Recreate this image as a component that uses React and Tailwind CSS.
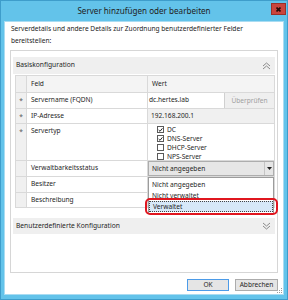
// ServerDialog.jsx
const font = "font-['Noto_Sans',sans-serif]";

const ChevronsUp = () => (
  <svg width="9" height="8" viewBox="0 0 9 8" fill="none" stroke="#8a8a8a" strokeWidth="1">
    <path d="M1 4 L4.5 1 L8 4" />
    <path d="M1 7 L4.5 4 L8 7" />
  </svg>
);

const ChevronsDown = () => (
  <svg width="9" height="8" viewBox="0 0 9 8" fill="none" stroke="#8a8a8a" strokeWidth="1">
    <path d="M1 1 L4.5 4 L8 1" />
    <path d="M1 4 L4.5 7 L8 4" />
  </svg>
);

const Checkbox = ({ checked, label }) => (
  <div className="flex items-center h-[9px] gap-[3px]">
    <div className="w-[7px] h-[7px] border border-[#5a5a5a] bg-white flex items-center justify-center">
      {checked && (
        <svg width="6" height="6" viewBox="0 0 6 6" fill="none" stroke="#222" strokeWidth="1.2">
          <path d="M0.8 3 L2.4 4.6 L5.3 1" />
        </svg>
      )}
    </div>
    <span>{label}</span>
  </div>
);

const Row = ({ star, label, h, children, valueClass = "" }) => (
  <>
    <div className={`${h} bg-[#f0f0f0] border-r border-b border-[#d9d9d9] flex justify-center pt-[3px] text-[#555]`}>
      {star ? "*" : ""}
    </div>
    <div className={`${h} border-r border-b border-[#d9d9d9] pl-[4px] pt-[2px]`}>{label}</div>
    <div className={`${h} border-b border-[#d9d9d9] ${valueClass}`}>{children}</div>
  </>
);

export default function App() {
  return (
    <div className={`w-[288px] h-[300px] bg-[#63c3ea] border border-[#3e9dcb] flex flex-col ${font} text-[#1e1e1e]`}>
      {/* title bar */}
      <div className="h-[20px] grid grid-cols-[1fr_auto_1fr] items-center">
        <div />
        <div className="text-[8.1px] text-[#222] pt-[1px]">Server hinzufügen oder bearbeiten</div>
        <div className="flex justify-end self-start pt-[2px] pr-[1px]">
          <div className="w-[15px] h-[12px] bg-[#c9453d] border border-[#9a3029] flex items-center justify-center">
            <svg width="5" height="5" viewBox="0 0 5 5" stroke="#2a0a08" strokeWidth="1.6">
              <path d="M0.5 0.5 L4.5 4.5 M4.5 0.5 L0.5 4.5" />
            </svg>
          </div>
        </div>
      </div>

      {/* client area */}
      <div className="flex-1 mx-[3px] mb-[4px] bg-white border border-[#a9dcf2] flex flex-col relative">
        <p className="text-[6.6px] leading-[12px] pl-[6px] pt-[1px] text-[#222]">
          Serverdetails und andere Details zur Zuordnung benutzerdefinierter Felder
          <br />
          bereitstellen:
        </p>

        <div className="ml-[5px] mr-[5px] mt-[3px] h-[223px] border border-[#d6d6d6] p-[1px] pt-[6px] flex flex-col">
          <div className="mx-[1px] h-[17px] bg-[#efefef] flex items-center justify-between pl-[3px] pr-[4px] text-[6.7px]">
            <span>Basiskonfiguration</span>
            <ChevronsUp />
          </div>

          {/* property grid */}
          <div className="relative ml-[3px] mr-[1px] mt-[1px] border-l border-r border-t border-[#d9d9d9] grid grid-cols-[11px_121px_1fr] text-[6.6px]">
            <div className="h-[17px] bg-[#f0f0f0] border-r border-b border-[#d9d9d9]" />
            <div className="h-[17px] bg-[#f4f4f4] border-r border-b border-[#d9d9d9] pl-[4px] flex items-center">Feld</div>
            <div className="h-[17px] bg-[#f4f4f4] border-b border-[#d9d9d9] pl-[4px] flex items-center">Wert</div>

            <Row star label="Servername (FQDN)" h="h-[16px]" valueClass="flex">
              <div className="w-[77px] h-full bg-white border-r border-[#d0d0d0] pl-[1px] pt-[2px]">dc.hertes.lab</div>
              <div className="flex-1 h-full bg-[#efefef] text-[#a0a0a0] flex items-center justify-center">Überprüfen</div>
            </Row>

            <Row star label="IP-Adresse" h="h-[15px]" valueClass="bg-[#f0f0f0] pl-[3px] pt-[2px]">
              192.168.200.1
            </Row>

            <Row star label="Servertyp" h="h-[37px]" valueClass="pl-[9px] pt-[1px] flex flex-col">
              <Checkbox checked label="DC" />
              <Checkbox checked label="DNS-Server" />
              <Checkbox label="DHCP-Server" />
              <Checkbox label="NPS-Server" />
            </Row>

            <Row label="Verwaltbarkeitsstatus" h="h-[16px]" valueClass="flex">
              <div className="flex-1 h-full bg-[#e6e6e6] border border-[#adadad] flex items-center">
                <span className="flex-1 pl-[3px]">Nicht angegeben</span>
                <div className="w-[9px] h-full border-l border-[#c4c4c4] flex items-center justify-center">
                  <svg width="5" height="3" viewBox="0 0 5 3">
                    <path d="M0 0 L5 0 L2.5 3 Z" fill="#222" />
                  </svg>
                </div>
              </div>
            </Row>

            <Row label="Besitzer" h="h-[16px]" />
            <Row label="Beschreibung" h="h-[15px]" />

            {/* open dropdown list */}
            <div className="absolute top-[101px] left-[132px] w-[126px] bg-white border border-[#9c9c9c] flex flex-col pt-[1px] pb-[1px]">
              <div className="h-[11px] pl-[3px] flex items-center">Nicht angegeben</div>
              <div className="h-[11px] pl-[3px] flex items-center">Nicht verwaltet</div>
              <div className="h-[11px] pl-[3px] flex items-center bg-[#d7e8f8] border border-dotted border-[#444]">Verwaltet</div>
            </div>

            {/* red highlight */}
            <div className="absolute top-[122px] left-[129px] w-[133px] h-[17px] rounded-[5px] border-2 border-[#e0161f]" />
          </div>

          <div className="mx-[1px] mt-[10px] h-[16px] bg-[#efefef] flex items-center justify-between pl-[3px] pr-[4px] text-[6.7px]">
            <span>Benutzerdefinierte Konfiguration</span>
            <ChevronsDown />
          </div>
        </div>

        <div className="flex justify-end gap-[6px] mr-[5px] mt-[6px] text-[6.6px]">
          <div className="w-[42px] h-[12px] bg-[#e5e5e5] border border-[#4c9be8] flex items-center justify-center">OK</div>
          <div className="w-[43px] h-[12px] bg-[#e5e5e5] border border-[#acacac] flex items-center justify-center">Abbrechen</div>
        </div>

        {/* resize grip */}
        <svg className="absolute right-[1px] bottom-[1px]" width="5" height="5" viewBox="0 0 5 5" fill="#9a9a9a">
          <rect x="4" y="0" width="1" height="1" />
          <rect x="2" y="2" width="1" height="1" />
          <rect x="4" y="2" width="1" height="1" />
          <rect x="0" y="4" width="1" height="1" />
          <rect x="2" y="4" width="1" height="1" />
          <rect x="4" y="4" width="1" height="1" />
        </svg>
      </div>
    </div>
  );
}
